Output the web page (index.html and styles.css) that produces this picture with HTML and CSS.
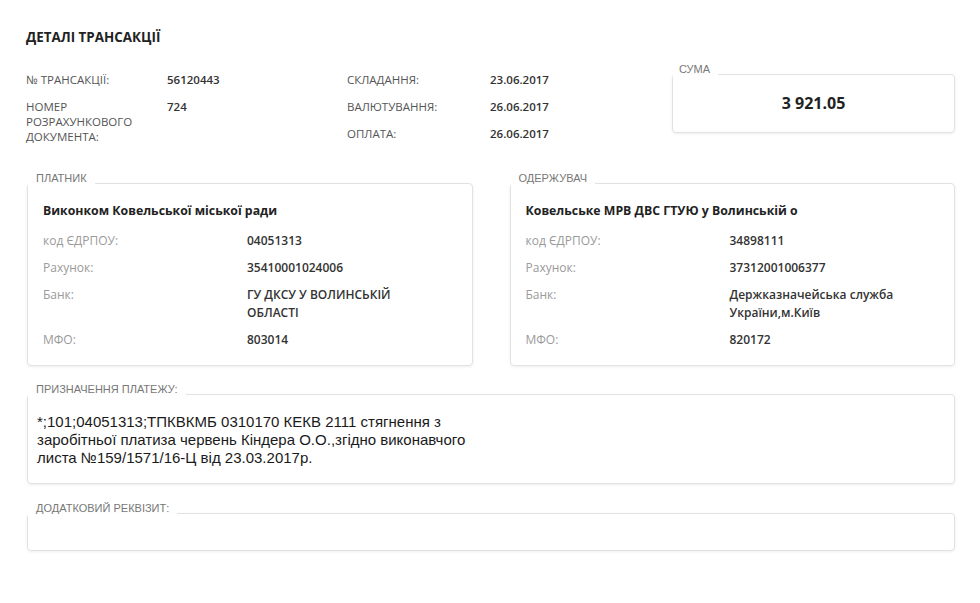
FILE: index.html
```html
<!DOCTYPE html>
<html lang="uk">
<head>
<meta charset="UTF-8">
<meta name="viewport" content="width=device-width, initial-scale=1.0">
<title>Деталі трансакції</title>
<link rel="stylesheet" href="styles.css">
</head>
<body>
  <div id="page">
    <h1 class="title">ДЕТАЛІ ТРАНСАКЦІЇ</h1>

    <div class="summary">
      <div class="info info-left">
        <div class="info-label">№ ТРАНСАКЦІЇ:</div>
        <div class="info-value">56120443</div>
        <div class="info-label">НОМЕР<br>РОЗРАХУНКОВОГО<br>ДОКУМЕНТА:</div>
        <div class="info-value">724</div>
      </div>
      <div class="info info-right">
        <div class="info-label">СКЛАДАННЯ:</div>
        <div class="info-value">23.06.2017</div>
        <div class="info-label">ВАЛЮТУВАННЯ:</div>
        <div class="info-value">26.06.2017</div>
        <div class="info-label">ОПЛАТА:</div>
        <div class="info-value">26.06.2017</div>
      </div>
      <fieldset class="box sum-box">
        <legend>СУМА</legend>
        <div class="sum">3 921.05</div>
      </fieldset>
    </div>

    <div class="parties">
      <fieldset class="box party">
        <legend>ПЛАТНИК</legend>
        <div class="party-name">Виконком Ковельської міської ради</div>
        <div class="party-grid">
          <div class="party-label">код ЄДРПОУ:</div>
          <div class="party-value">04051313</div>
          <div class="party-label">Рахунок:</div>
          <div class="party-value">35410001024006</div>
          <div class="party-label">Банк:</div>
          <div class="party-value">ГУ ДКСУ У ВОЛИНСЬКІЙ ОБЛАСТІ</div>
          <div class="party-label">МФО:</div>
          <div class="party-value">803014</div>
        </div>
      </fieldset>
      <fieldset class="box party">
        <legend>ОДЕРЖУВАЧ</legend>
        <div class="party-name">Ковельське МРВ ДВС ГТУЮ у Волинській о</div>
        <div class="party-grid">
          <div class="party-label">код ЄДРПОУ:</div>
          <div class="party-value">34898111</div>
          <div class="party-label">Рахунок:</div>
          <div class="party-value">37312001006377</div>
          <div class="party-label">Банк:</div>
          <div class="party-value">Держказначейська служба України,м.Київ</div>
          <div class="party-label">МФО:</div>
          <div class="party-value">820172</div>
        </div>
      </fieldset>
    </div>

    <fieldset class="box purpose">
      <legend>ПРИЗНАЧЕННЯ ПЛАТЕЖУ:</legend>
      <div class="purpose-text">*;101;04051313;ТПКВКМБ 0310170 КЕКВ 2111 стягнення з<br>заробітньої платиза червень Кіндера О.О.,згідно виконавчого<br>листа №159/1571/16-Ц від 23.03.2017р.</div>
    </fieldset>

    <fieldset class="box extra">
      <legend>ДОДАТКОВИЙ РЕКВІЗИТ:</legend>
      <div class="extra-text"></div>
    </fieldset>
  </div>
</body>
</html>
```

FILE: styles.css
```css
body {
  margin: 0;
  background-color: #fff;
  font-family: "Open Sans", "Liberation Sans", Arial, sans-serif;
  color: #333;
}
#page {
  width: 928px;
  padding: 28px 25px 40px 27px;
}
.title {
  margin: 0 0 17px -1px;
  font-size: 13.4px;
  line-height: 18px;
  font-weight: 700;
  color: #222;
}

/* top block */
.summary {
  display: flex;
  align-items: flex-start;
}
.info {
  display: grid;
  row-gap: 12px;
  padding-top: 9px;
  font-size: 11.5px;
  line-height: 15px;
}
.info-left {
  width: 321px;
  grid-template-columns: 140px auto;
}
.info-right {
  width: 324px;
  grid-template-columns: 142px auto;
}
.info-label {
  color: #555;
  margin-left: -1px;
}
.info-value {
  font-weight: 600;
  color: #333;
}

/* boxes */
.box {
  margin: 0;
  padding: 0;
  min-width: 0;
  border: 1px solid #e2e2e2;
  border-radius: 4px;
  box-shadow: 0 1px 3px rgba(0, 0, 0, 0.07);
}
.box legend {
  margin-left: 0;
  padding: 0 8px 10px 8px;
  font-family: "Liberation Sans", Arial, sans-serif;
  font-size: 11px;
  line-height: 12px;
  color: #777;
}
.sum-box {
  flex: 1;
}
.sum-box legend {
  padding-left: 6px;
}
.sum {
  padding: 8px 0 19px;
  text-align: center;
  font-size: 16px;
  line-height: 20px;
  font-weight: 700;
  color: #222;
}

.parties {
  display: grid;
  grid-template-columns: 1fr 1fr;
  column-gap: 37px;
  margin-top: 28px;
}
.party {
  padding: 8px 15px 16px;
}
.party legend {
  margin-left: -15px;
}
.party-name {
  margin-bottom: 12px;
  font-size: 12.3px;
  line-height: 18px;
  font-weight: 700;
  color: #222;
}
.party-grid {
  display: grid;
  grid-template-columns: 204px 180px;
  row-gap: 9px;
  font-size: 12px;
  line-height: 18px;
}
.party-label {
  color: #9a9a9a;
}
.party-value {
  font-weight: 600;
  color: #333;
}

.purpose {
  margin-top: 17px;
  padding: 8px 9px 16px;
}
.purpose legend,
.extra legend {
  margin-left: -9px;
}
.purpose-text {
  font-family: "Liberation Sans", Arial, sans-serif;
  font-size: 15px;
  line-height: 18px;
  color: #1a1a1a;
}

.extra {
  margin-top: 18px;
  padding: 8px 9px 0;
}
.extra-text {
  height: 18px;
}
```
